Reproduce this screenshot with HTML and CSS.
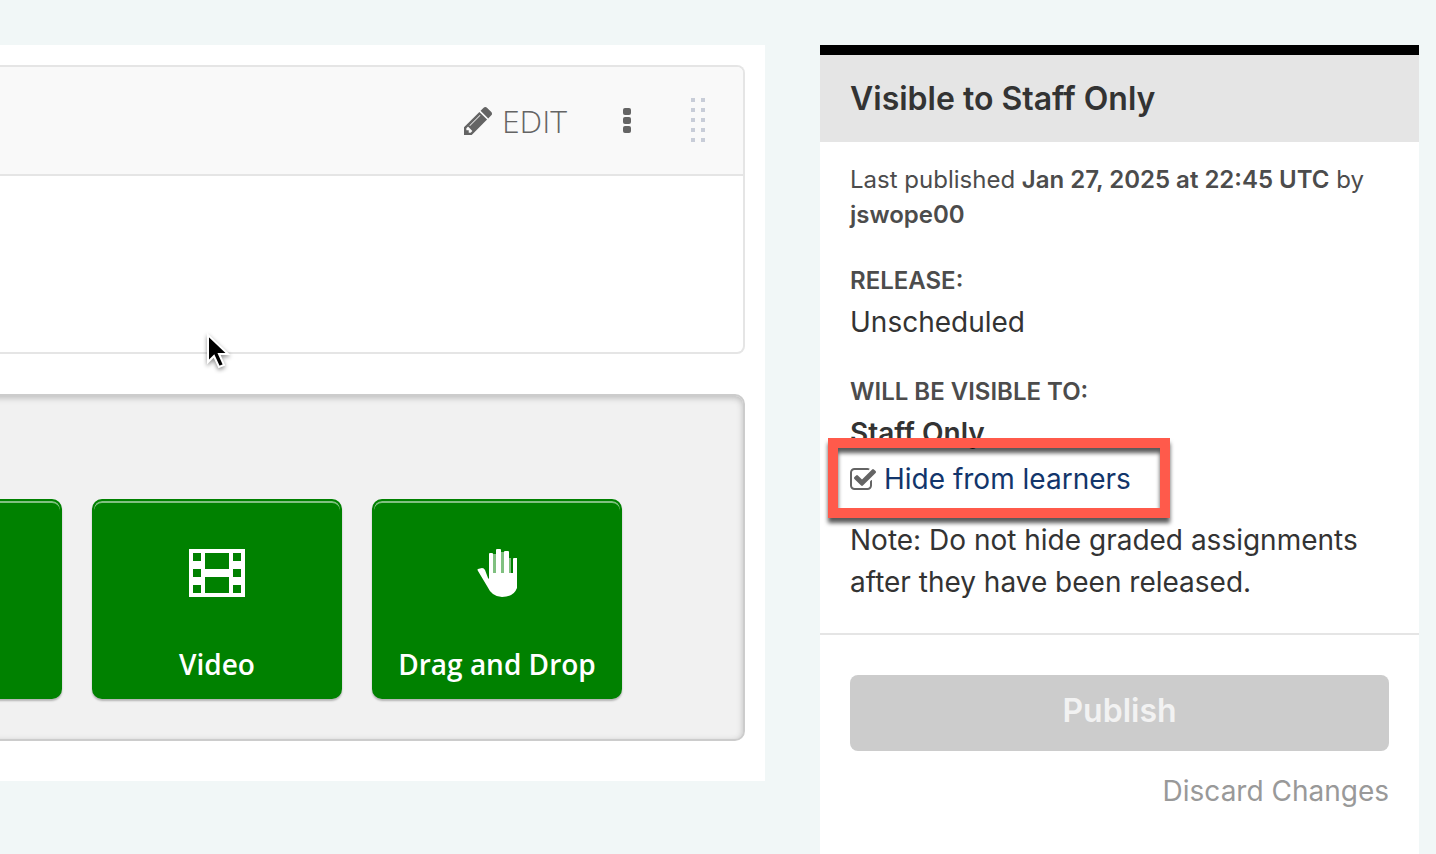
FILE: index.html
```html
<!DOCTYPE html>
<html lang="en">
<head>
  <meta charset="UTF-8">
  <meta name="viewport" content="width=device-width, initial-scale=1">
  <title>Unit editor</title>
  <link rel="stylesheet" href="styles.css">
</head>
<body>
  <div class="page">
    <main class="content">
      <section class="component">
        <header class="component-header">
          <button type="button" class="btn-edit">
            <svg class="icon-pencil" viewBox="128 149 1515 1515" aria-hidden="true"><path d="M491 1536l91-91-235-235-91 91v107h128v128h107zm523-928q0-22-22-22-10 0-17 7l-542 542q-7 7-7 17 0 22 22 22 10 0 17-7l542-542q7-7 7-17zm-54-192l416 416-832 832h-416v-416zm683 96q0 53-37 90l-166 166-416-416 166-165q36-38 90-38 53 0 91 38l235 234q37 39 37 91z"/></svg>
            <span>EDIT</span>
          </button>
          <button type="button" class="btn-more" aria-label="More actions">
            <svg width="8" height="26" viewBox="0 0 8 26" aria-hidden="true">
              <rect width="8" height="7" rx="2"/>
              <rect y="9" width="8" height="7" rx="2"/>
              <rect y="18" width="8" height="7" rx="2"/>
            </svg>
          </button>
          <button type="button" class="btn-drag" aria-label="Drag to reorder">
            <svg width="14" height="46" viewBox="0 0 14 46" aria-hidden="true">
              <path d="M0 0h4v4H0zM10 0h4v4h-4zM0 10h4v4H0zM10 10h4v4h-4zM0 20h4v4H0zM10 20h4v4h-4zM0 30h4v4H0zM10 30h4v4h-4zM0 40h4v4H0zM10 40h4v4h-4z"/>
            </svg>
          </button>
        </header>
        <div class="component-body"></div>
      </section>

      <section class="add-component">
        <button type="button" class="tile" aria-label="Problem"></button>
        <button type="button" class="tile">
          <svg width="56" height="48" viewBox="0 0 56 48" aria-hidden="true">
            <path fill-rule="evenodd" d="M0 0h56v48H0zM4 4v8h8V4zM4 20v8h8v-8zM4 36v8h8v-8zM44 4v8h8V4zM44 20v8h8v-8zM44 36v8h8v-8zM16 4v16h24V4zM16 28v16h24V28z"/>
          </svg>
          <span>Video</span>
        </button>
        <button type="button" class="tile">
          <svg width="40" height="48" viewBox="0 0 40 48" aria-hidden="true">
            <path class="gaps" d="M16 5h3v19h-3zM24 3h3v21h-3zM31 9h3v15h-3z"/>
            <path d="M1 20l4-1q2 0 3 2l3 8 1 1V5q0-1 1-1h2q1 0 1 1v19h3V1q0-1 1-1h3q1 0 1 1v23h3V3q0-1 1-1h3q1 0 1 1v21h4V10q0-1 1-1h3q1 0 1 1v25q-2 13-16 13-10 0-15-11L1 22q-1-2 0-2z"/>
          </svg>
          <span>Drag and Drop</span>
        </button>
      </section>
    </main>

    <aside class="sidebar">
      <h2 class="sidebar-title">Visible to Staff Only</h2>
      <div class="sidebar-body">
        <p class="published">Last published <strong>Jan 27, 2025 at 22:45 UTC</strong> by <strong>jswope00</strong></p>

        <h3>RELEASE:</h3>
        <p class="release">Unscheduled</p>

        <h3>WILL BE VISIBLE TO:</h3>
        <p class="audience">Staff Only</p>
        <label class="hide-toggle">
          <input type="checkbox" checked>
          <svg class="box-checked" viewBox="64 128 1664 1408" aria-hidden="true"><path d="M1472 930v318q0 119-84.500 203.500t-203.500 84.500h-832q-119 0-203.500-84.500t-84.500-203.500v-832q0-119 84.500-203.500t203.500-84.500h832q63 0 117 25 15 7 18 23 3 17-9 29l-49 49q-10 10-23 10-3 0-9-2-23-6-45-6h-832q-66 0-113 47t-47 113v832q0 66 47 113t113 47h832q66 0 113-47t47-113v-254q0-13 9-22l64-64q10-10 23-10 6 0 12 3 20 8 20 29zm231-489l-814 814q-24 24-57 24t-57-24l-430-430q-24-24-24-57t24-57l110-110q24-24 57-24t57 24l263 263 647-647q24-24 57-24t57 24l110 110q24 24 24 57t-24 57z"/></svg>
          <span>Hide from learners</span>
        </label>
        <p class="note">Note: Do not hide graded assignments after they have been released.</p>
      </div>
      <div class="sidebar-actions">
        <button type="button" class="btn-publish" disabled>Publish</button>
        <a href="#" class="discard">Discard Changes</a>
      </div>
    </aside>
  </div>

  <svg class="pointer" width="26" height="40" viewBox="0 0 26 40" aria-hidden="true">
    <path d="M3 3v27l6-6 5 11 5-2-5-11h9z"/>
  </svg>
</body>
</html>
```
FILE: styles.css
```css
* {
  box-sizing: border-box;
}

body {
  margin: 0;
  background: #f1f7f7;
  color: #333;
  font-family: Inter, sans-serif;
  font-size: 28px;
  line-height: 42px;
}

h2, h3, p {
  margin: 0;
}

button {
  border: none;
  padding: 0;
  background: none;
  cursor: pointer;
}

.page {
  display: grid;
  grid-template-columns: minmax(0, 765fr) minmax(0, 599fr);
  gap: 55px;
  min-height: 100vh;
  padding: 45px 17px 0 0;
}

/* left column */
.content {
  display: flex;
  flex-direction: column;
  gap: 40px;
  align-self: start;
  padding: 20px 20px 40px 0;
  background: #fff;
  overflow: hidden;
}

.component {
  border: 2px solid #e5e5e5;
  border-left: none;
  border-radius: 0 8px 8px 0;
  overflow: hidden;
}

.component-header {
  display: flex;
  align-items: center;
  justify-content: flex-end;
  padding: 31px 38px 30px 0;
  border-bottom: 2px solid #e5e5e5;
  background: #f9f9f9;
}

.component-header svg {
  display: block;
}

.btn-edit {
  display: flex;
  align-items: center;
  gap: 10px;
  color: #646464;
  font-family: "Open Sans", sans-serif;
  font-size: 32px;
  font-weight: 300;
  line-height: 46px;
}

.icon-pencil {
  width: 28px;
  height: 28px;
  fill: #646464;
}

.btn-more {
  margin: 0 60px 0 56px;
  fill: #646464;
}

.btn-drag {
  fill: #c8cdd8;
  cursor: move;
}

.component-body {
  height: 176px;
}

/* runs on past the left edge so its inner shadow stays out of view */
.add-component {
  display: flex;
  justify-content: flex-end;
  gap: 30px;
  margin-left: -20px;
  padding: 103px 121px 40px 0;
  border: 2px solid #ccc;
  border-radius: 10px;
  background: #f1f1f1;
  box-shadow: inset 0 2px 6px #bbb;
  overflow: hidden;
}

.tile {
  display: flex;
  flex: 0 0 250px;
  flex-direction: column;
  align-items: center;
  justify-content: space-between;
  height: 200px;
  padding: 48px 10px 13px;
  border: 2px solid #008100;
  border-radius: 10px;
  background: #008100;
  box-shadow: 0 2px 2px rgba(0, 0, 0, 0.25), inset 0 2px 0 rgba(255, 255, 255, 0.5);
  color: #fff;
  fill: #fff;
  font-family: "Open Sans", sans-serif;
  font-size: 28px;
  font-weight: 600;
  line-height: 40px;
  white-space: nowrap;
}

.gaps {
  opacity: 0.5;
}

/* right column */
.sidebar {
  border-top: 10px solid #000;
  background: #fff;
}

.sidebar-title {
  padding: 23px 30px 22px;
  background: #e5e5e5;
  font-size: 32px;
  font-weight: 600;
}

.sidebar-body {
  padding: 20px 30px 30px;
  border-bottom: 2px solid #e5e5e5;
}

.published {
  margin-bottom: 28px;
  color: #4c4c4c;
  font-size: 24px;
  line-height: 35px;
}

.published strong {
  font-weight: 600;
}

.sidebar-body h3 {
  color: #4c4c4c;
  font-size: 24px;
  font-weight: 600;
  line-height: 41px;
}

.release {
  margin-bottom: 28px;
}

.audience {
  font-weight: 600;
}

.hide-toggle {
  position: relative;
  display: flex;
  align-items: center;
  gap: 8px;
  width: fit-content;
  margin: 4px 0 19px;
  color: #12356b;
  cursor: pointer;
}

.hide-toggle input {
  position: absolute;
  width: 26px;
  height: 26px;
  margin: 0;
  opacity: 0;
}

.box-checked {
  width: 26px;
  height: 22px;
  fill: #646464;
}

/* callout frame over the toggle */
.hide-toggle::after {
  content: "";
  position: absolute;
  top: -20px;
  right: -39px;
  bottom: -18px;
  left: -22px;
  border: 10px solid #ff5a4b;
  filter: drop-shadow(0 5px 2px rgba(0, 0, 0, 0.65));
  pointer-events: none;
}

.sidebar-actions {
  display: flex;
  flex-direction: column;
  align-items: flex-end;
  gap: 19px;
  padding: 40px 30px;
}

.btn-publish {
  width: 100%;
  padding: 15px 0 19px;
  border-radius: 8px;
  background: #ccc;
  color: #f2f2f2;
  font-family: inherit;
  font-size: 32px;
  font-weight: 600;
  line-height: 42px;
  cursor: default;
}

.discard {
  color: #999;
  text-decoration: none;
}

.pointer {
  position: absolute;
  top: 332px;
  left: 205px;
  stroke: #fff;
  stroke-width: 2;
  filter: drop-shadow(0 2px 2px rgba(0, 0, 0, 0.45));
}
```
